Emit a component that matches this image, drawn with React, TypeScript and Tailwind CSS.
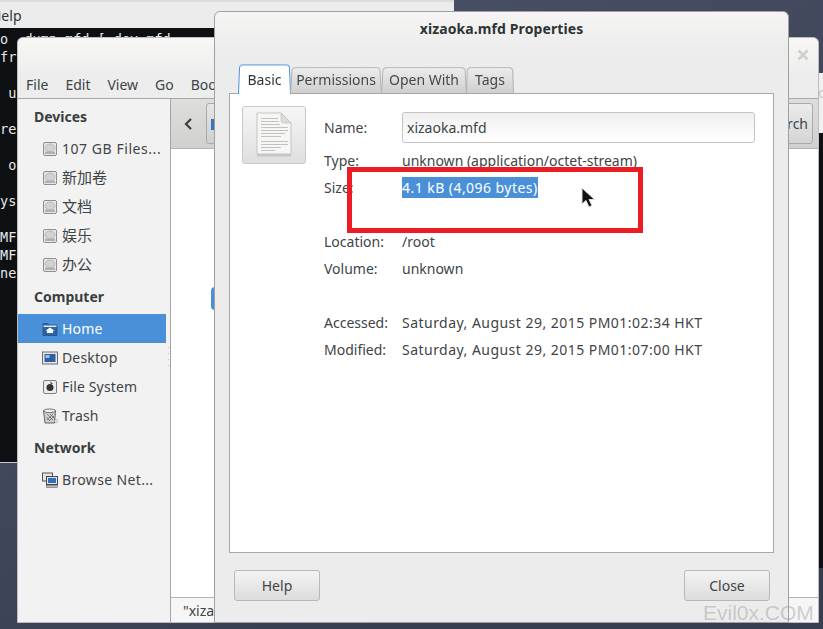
const uiFont = "font-['Noto_Sans','Noto_Sans_CJK_SC',sans-serif]";

const terminalLines = [
  "o -dump mfd [-dev mfd",
  "fr",
  "",
  " u",
  "",
  "re",
  "",
  " o",
  "",
  "ys",
  "",
  "MF",
  "MF",
  "ne",
];

function DriveIcon() {
  return (
    <svg width="16" height="16" viewBox="0 0 16 16" className="shrink-0">
      <rect x="1.5" y="1.5" width="13" height="13" rx="1.5" fill="#e8e8e8" stroke="#8f8f8f" />
      <ellipse cx="8" cy="6.8" rx="5" ry="3.8" fill="#d2d2d2" stroke="#ababab" strokeWidth="0.7" />
      <rect x="3" y="10.5" width="10" height="2.5" fill="#b0b0b0" />
    </svg>
  );
}

function HomeIcon() {
  return (
    <svg width="16" height="16" viewBox="0 0 16 16" className="shrink-0">
      <path d="M1 2.5h5l1 1.5h8v10.5H1z" fill="#2f63a8" stroke="#1f4478" strokeWidth="0.6" />
      <rect x="1.5" y="4.5" width="13" height="1.5" fill="#dfe8f4" />
      <path d="M8 6.5l4.5 3.2h-1.5V12H5V9.7H3.5z" fill="#fff" />
    </svg>
  );
}

function DesktopIcon() {
  return (
    <svg width="16" height="16" viewBox="0 0 16 16" className="shrink-0">
      <rect x="0.5" y="2" width="15" height="12" fill="#e8e8e8" stroke="#6f6f6f" />
      <rect x="2.5" y="4" width="11" height="8" fill="#2f5fa3" />
      <rect x="3.5" y="5" width="4" height="3" fill="#9fc0e8" />
    </svg>
  );
}

function FileSystemIcon() {
  return (
    <svg width="16" height="16" viewBox="0 0 16 16" className="shrink-0">
      <rect x="1.5" y="1.5" width="13" height="13" rx="1.5" fill="#ececec" stroke="#7f7f7f" />
      <circle cx="8" cy="8.5" r="3.5" fill="#333" />
      <path d="M8 2.5l3 2-2 1z" fill="#555" />
    </svg>
  );
}

function TrashIcon() {
  return (
    <svg width="16" height="16" viewBox="0 0 16 16" className="shrink-0">
      <path d="M1.5 2.5h12l-1 12.5H3z" fill="#cfcfcf" stroke="#555" strokeWidth="0.9" />
      <ellipse cx="7.5" cy="2.8" rx="6" ry="1.8" fill="#eee" stroke="#555" strokeWidth="0.8" />
      <path d="M5 6l6 6M8 6l4 4M4.5 9l3.5 4M11 6l-6 6M12 8l-5 5" stroke="#6d6d6d" strokeWidth="0.8" />
      <circle cx="14" cy="13" r="1.5" fill="#fff" stroke="#777" strokeWidth="0.5" />
    </svg>
  );
}

function NetworkIcon() {
  return (
    <svg width="16" height="16" viewBox="0 0 16 16" className="shrink-0">
      <rect x="0.5" y="1" width="10" height="8" fill="#e4e4e4" stroke="#555" />
      <rect x="4.5" y="4.5" width="11" height="8" fill="#dfe6ee" stroke="#444" />
      <rect x="6" y="6" width="8" height="5" fill="#2f6fb8" />
      <rect x="4.5" y="13.5" width="11" height="2" fill="#bbb" stroke="#555" strokeWidth="0.5" />
    </svg>
  );
}

function FileIcon() {
  return (
    <svg width="38" height="46" viewBox="0 0 38 46">
      <path d="M2 2h24l10 10v31H2z" fill="#aaa" opacity="0.5" transform="translate(0 1.5)" />
      <path d="M2 1h24l10 10v31H2z" fill="#f6f6f4" stroke="#c4c4c0" />
      <path d="M26 1l10 10h-7q-3 0-3-3z" fill="#dcdcd8" stroke="#bdbdb9" strokeWidth="0.6" />
      <g stroke="#c2c2c2" strokeWidth="1">
        <path d="M6 6.5h17M6 9.5h18M6 12.5h19M6 15.5h27M6 18.5h27M6 21.5h24M6 24.5h20" />
        <path d="M6 29.5h27M6 32.5h27M6 35.5h20M6 38.5h14" />
      </g>
    </svg>
  );
}

function SidebarHeader({ label }: { label: string }) {
  return (
    <div className="h-[29px] mt-[3px] mb-[3px] pl-[16px] flex items-center font-bold text-[14px] text-[#3a3f41]">
      {label}
    </div>
  );
}

function SidebarItem({
  label,
  icon,
  active,
  labelClass,
}: {
  label: string;
  icon: React.ReactNode;
  active?: boolean;
  labelClass?: string;
}) {
  return (
    <div
      className={
        active
          ? "h-[29px] pl-[24px] flex items-center gap-[4px] text-[14px] bg-[#4a90d9] text-white"
          : "h-[29px] pl-[24px] flex items-center gap-[4px] text-[14px] text-[#3f4446]"
      }
    >
      {icon}
      <span className={labelClass ?? "tracking-[0.15px] whitespace-nowrap"}>{label}</span>
    </div>
  );
}

function InfoRow({ label, value }: { label: string; value: React.ReactNode }) {
  return (
    <div className="h-[27px] flex items-center text-[14px] text-[#3f4446]">
      <div className="w-[78px] shrink-0">{label}</div>
      <div>{value}</div>
    </div>
  );
}

function Tab({ label, width, active }: { label: string; width: string; active?: boolean }) {
  return (
    <div className={`relative h-[30px] ${width} flex items-center justify-center -mr-px`}>
      <div
        className={
          active
            ? "absolute inset-0 -bottom-px origin-bottom [transform:perspective(70px)_rotateX(6deg)] rounded-t-[4px] border border-b-0 border-[#4a90d9] bg-white"
            : "absolute inset-0 top-[3px] origin-bottom [transform:perspective(70px)_rotateX(6deg)] rounded-t-[4px] border border-b-0 border-[#b0b0b0] bg-gradient-to-b from-[#ececec] to-[#cfcfcf]"
        }
      />
      <span className={active ? "relative z-10 pt-[2px] text-[14px] text-[#2e3436]" : "relative pt-[2px] text-[14px] text-[#44494b]"}>
        {label}
      </span>
    </div>
  );
}

function DialogButton({ label }: { label: string }) {
  return (
    <button className="w-[86px] h-[31px] rounded-[3px] border border-[#b8b8b8] bg-gradient-to-b from-[#f4f4f4] to-[#dcdcdc] text-[14px] text-[#3f4446]">
      {label}
    </button>
  );
}

export default function App() {
  return (
    <div className={`relative w-[823px] h-[629px] overflow-hidden bg-[linear-gradient(155deg,#4c5469,#383e52_80%)] ${uiFont}`}>
      {/* terminal behind */}
      <div className="absolute left-0 top-0 w-[454px] h-[463px] flex flex-col overflow-hidden border-b border-[#c8c8c8]">
        <div className="h-[28px] shrink-0 bg-[#ececec] border-t-2 border-[#dcdcdc] flex items-center text-[14px] text-[#2e3436]">
          <span className="-ml-[9px]">Help</span>
        </div>
        <pre className="flex-1 pt-[2px] bg-[#0f1014] text-[#e8e8e8] font-['DejaVu_Sans_Mono',monospace] text-[13.5px] leading-[18px]">
          {terminalLines.join("\n")}
        </pre>
      </div>

      {/* second window at the far right */}
      <div className="absolute left-[818px] top-[73px] w-[5px] h-[495px] flex flex-col overflow-hidden">
        <div className="h-[60px] bg-[#f0f0f0] pt-[9px] text-[14px] text-[#c8c8c8]">c</div>
        <div className="flex-1 bg-[#0f1014]" />
      </div>

      {/* files window */}
      <div className="absolute left-[17px] top-[37px] w-[802px] h-[586px] flex flex-col rounded-t-[6px] border border-[#bdbdbd] bg-[#ededed] overflow-hidden">
        <div className="h-[33px] shrink-0 flex items-center justify-end pr-[9px] bg-gradient-to-b from-[#f8f7f6] to-[#efefee]">
          <svg width="12" height="12" viewBox="0 0 12 12">
            <path d="M1.5 1.5l9 9M10.5 1.5l-9 9" stroke="#cfcfcf" strokeWidth="2.6" />
          </svg>
        </div>
        <div className="h-[28px] shrink-0 flex items-center pl-[8px] gap-[17px] text-[14px] text-[#3f4446] border-b border-[#a8a8a8]">
          <span>File</span>
          <span>Edit</span>
          <span>View</span>
          <span>Go</span>
          <span>Bookmarks</span>
        </div>
        <div className="flex-1 flex min-h-0">
          <div className="relative w-[153px] shrink-0 pr-[4px] bg-[#f2f2f2] border-r border-[#a4a4a4]">
            <SidebarHeader label="Devices" />
            <SidebarItem label="107 GB Files..." icon={<DriveIcon />} labelClass="tracking-[0.55px] whitespace-nowrap" />
            <SidebarItem label="新加卷" icon={<DriveIcon />} labelClass="text-[15px]" />
            <SidebarItem label="文档" icon={<DriveIcon />} labelClass="text-[15px]" />
            <SidebarItem label="娱乐" icon={<DriveIcon />} labelClass="text-[15px]" />
            <SidebarItem label="办公" icon={<DriveIcon />} labelClass="text-[15px]" />
            <SidebarHeader label="Computer" />
            <SidebarItem label="Home" icon={<HomeIcon />} active />
            <SidebarItem label="Desktop" icon={<DesktopIcon />} />
            <SidebarItem label="File System" icon={<FileSystemIcon />} />
            <SidebarItem label="Trash" icon={<TrashIcon />} />
            <SidebarHeader label="Network" />
            <SidebarItem label="Browse Net..." icon={<NetworkIcon />} labelClass="tracking-[0.35px] whitespace-nowrap" />
            {/* pane resize grip */}
            <div className="absolute right-px top-[248px] flex flex-col gap-[5px]">
              <div className="w-px h-px bg-[#c4c4c4]" />
              <div className="w-px h-px bg-[#c4c4c4]" />
              <div className="w-px h-px bg-[#c4c4c4]" />
              <div className="w-px h-px bg-[#c4c4c4]" />
            </div>
          </div>
          <div className="flex-1 flex flex-col min-w-0 bg-white">
            <div className="h-[50px] shrink-0 flex items-center justify-between pr-[5px] border-b border-[#b5b5b5] bg-gradient-to-b from-[#dededc] to-[#d0d0ce]">
              <div className="flex items-center">
                <svg width="35" height="16" viewBox="0 0 35 16">
                  <path d="M20 3l-5 5 5 5" fill="none" stroke="#3a3f41" strokeWidth="2.2" />
                </svg>
                <div className="h-[41px] w-[60px] rounded-[3px] border border-[#aaaaaa] bg-gradient-to-b from-[#e6e6e6] to-[#cfcfcf] pl-[4px] pt-[15px]">
                  <div className="w-[8px] h-[11px] bg-[#3d74b8]" />
                </div>
              </div>
              <div className="h-[41px] w-[70px] pr-[4px] rounded-[3px] border border-[#aaaaaa] bg-gradient-to-b from-[#ececec] to-[#d4d4d4] flex items-center justify-end text-[14px] text-[#3f4446]">
                Search
              </div>
            </div>
            <div className="flex-1 pl-[40px] pt-[138px]">
              <div className="w-[120px] h-[23px] rounded-l-[4px] bg-[#4a90d9]" />
            </div>
            <div className="h-[25px] shrink-0 flex items-center pl-[12px] border-t border-[#b5b5b5] bg-[#f6f6f6] text-[14px] text-[#3f4446] whitespace-nowrap">
              "xizaoka.mfd" selected (4.1 kB)
            </div>
          </div>
        </div>
      </div>

      {/* properties dialog */}
      <div className="absolute left-[214px] top-[11px] w-[575px] h-[612px] flex flex-col rounded-t-[6px] border border-[#a0a0a0] bg-[#ececec]">
        <div className="h-[38px] shrink-0 pb-[6px] flex items-center justify-center rounded-t-[6px] bg-gradient-to-b from-[#f6f5f4] to-[#ececec] font-bold text-[14px] tracking-[0.1px] text-[#2e3436]">
          xizaoka.mfd Properties
        </div>
        <div className="mt-[13px] ml-[23px] h-[30px] shrink-0 flex relative z-10">
          <Tab label="Basic" width="w-[53px]" active />
          <Tab label="Permissions" width="w-[92px]" />
          <Tab label="Open With" width="w-[86px]" />
          <Tab label="Tags" width="w-[48px]" />
        </div>
        <div className="mx-[14px] h-[460px] shrink-0 flex gap-[18px] pl-[12px] pr-[18px] pt-[12px] border border-[#a8a8a8] bg-white">
          <div className="w-[64px] h-[58px] shrink-0 flex items-center justify-center rounded-[3px] border border-[#c8c8c8] bg-gradient-to-b from-[#f6f6f6] to-[#dfdfdf]">
            <FileIcon />
          </div>
          <div className="flex-1 pt-[6px]">
            <div className="h-[31px] flex items-center text-[14px] text-[#3f4446]">
              <div className="w-[78px] shrink-0">Name:</div>
              <div className="flex-1 h-full flex items-center px-[4px] rounded-[3px] border border-[#c4c4c4] bg-gradient-to-b from-[#f0f0f0] to-white">
                xizaoka.mfd
              </div>
            </div>
            <div className="mt-[4px]">
              <InfoRow label="Type:" value="unknown (application/octet-stream)" />
              <InfoRow
                label="Size:"
                value={<span className="inline-block leading-[21px] tracking-[0.45px] bg-[#4a90d9] text-white">4.1 kB (4,096 bytes)</span>}
              />
              <div className="h-[27px]" />
              <InfoRow label="Location:" value="/root" />
              <InfoRow label="Volume:" value="unknown" />
              <div className="h-[27px]" />
              <InfoRow label="Accessed:" value={<span className="tracking-[0.47px]">Saturday, August 29, 2015 PM01:02:34 HKT</span>} />
              <InfoRow label="Modified:" value={<span className="tracking-[0.47px]">Saturday, August 29, 2015 PM01:07:00 HKT</span>} />
            </div>
          </div>
        </div>
        <div className="mt-[17px] pl-[19px] pr-[18px] flex justify-between">
          <DialogButton label="Help" />
          <DialogButton label="Close" />
        </div>
      </div>

      {/* annotation painted over the screenshot */}
      <div className="absolute left-[347px] top-[167px] w-[296px] h-[66px] border-[5px] border-[#ed1c24]" />
      <svg className="absolute left-[580px] top-[187px]" width="16" height="22" viewBox="0 0 16 22">
        <path d="M2 1v16l4-3.5 3 6.5 3-1.5-3-6h5.5z" fill="#111" stroke="#ddd" strokeWidth="1" />
      </svg>
      <div className="absolute left-[703px] top-[601px] font-['Liberation_Sans',sans-serif] text-[21px] leading-[24px] text-[#8c8c8c]/40">
        Evil0x.COM
      </div>
    </div>
  );
}
